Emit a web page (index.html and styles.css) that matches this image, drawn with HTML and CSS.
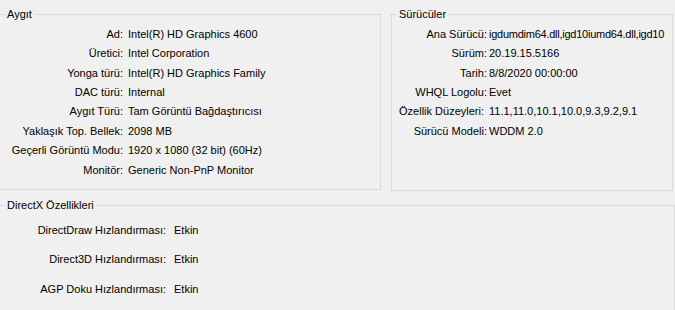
FILE: index.html
```html
<!DOCTYPE html>
<html lang="tr">
<head>
    <meta charset="UTF-8">
    <title>Ekran</title>
    <link rel="stylesheet" href="styles.css">
</head>
<body>

<div class="dx-page">
    <div class="dx-top">
        <fieldset class="dx-group dx-device">
            <legend class="dx-legend">Aygıt</legend>
            <div class="dx-rows">
                <div class="dx-label">Ad:</div><div class="dx-value">Intel(R) HD Graphics 4600</div>
                <div class="dx-label">Üretici:</div><div class="dx-value">Intel Corporation</div>
                <div class="dx-label">Yonga türü:</div><div class="dx-value">Intel(R) HD Graphics Family</div>
                <div class="dx-label">DAC türü:</div><div class="dx-value">Internal</div>
                <div class="dx-label">Aygıt Türü:</div><div class="dx-value">Tam Görüntü Bağdaştırıcısı</div>
                <div class="dx-label">Yaklaşık Top. Bellek:</div><div class="dx-value">2098 MB</div>
                <div class="dx-label">Geçerli Görüntü Modu:</div><div class="dx-value">1920 x 1080 (32 bit) (60Hz)</div>
                <div class="dx-label">Monitör:</div><div class="dx-value">Generic Non-PnP Monitor</div>
            </div>
        </fieldset>
        <fieldset class="dx-group dx-drivers">
            <legend class="dx-legend">Sürücüler</legend>
            <div class="dx-rows">
                <div class="dx-label">Ana Sürücü:</div><div class="dx-value dx-tight">igdumdim64.dll,igd10iumd64.dll,igd10</div>
                <div class="dx-label">Sürüm:</div><div class="dx-value">20.19.15.5166</div>
                <div class="dx-label">Tarih:</div><div class="dx-value">8/8/2020 00:00:00</div>
                <div class="dx-label">WHQL Logolu:</div><div class="dx-value">Evet</div>
                <div class="dx-label dx-wide">Özellik Düzeyleri:</div><div class="dx-value">11.1,11.0,10.1,10.0,9.3,9.2,9.1</div>
                <div class="dx-label">Sürücü Modeli:</div><div class="dx-value">WDDM 2.0</div>
            </div>
        </fieldset>
    </div>

    <fieldset class="dx-group dx-features">
        <legend class="dx-legend">DirectX Özellikleri</legend>
        <div class="dx-rows">
            <div class="dx-label">DirectDraw Hızlandırması:</div><div class="dx-value">Etkin</div>
            <div class="dx-label">Direct3D Hızlandırması:</div><div class="dx-value">Etkin</div>
            <div class="dx-label">AGP Doku Hızlandırması:</div><div class="dx-value">Etkin</div>
        </div>
    </fieldset>
</div>

</body>
</html>
```

FILE: styles.css
```css
body {
    margin: 0;
    padding: 0;
    background-color: #f0f0f0;
    font-family: "Liberation Sans", Arial, sans-serif;
    font-size: 11px;
    color: #000;
    overflow: hidden;
}
.dx-page {
    width: 676px;
    height: 310px;
    margin-left: -1px;
    padding-top: 7px;
    box-sizing: border-box;
    overflow: hidden;
}
.dx-top {
    display: flex;
    gap: 10px;
}
.dx-group {
    margin: 0;
    padding: 0;
    min-width: 0;
    border: 1px solid #dadada;
    box-sizing: border-box;
}
.dx-legend {
    margin-left: 5px;
    padding: 0 2px;
    line-height: 14px;
}
.dx-device {
    width: 382px;
    height: 183px;
}
.dx-drivers {
    width: 282px;
    height: 184px;
}
.dx-features {
    width: 676px;
    height: 116px;
    margin-top: 7px;
}
.dx-rows {
    display: grid;
    align-items: center;
    white-space: nowrap;
}
.dx-label {
    text-align: right;
}
.dx-value {
    overflow: hidden;
}
.dx-tight {
    letter-spacing: -0.25px;
}
.dx-device .dx-rows {
    grid-template-columns: 123px 1fr;
    grid-auto-rows: 19.45px;
    column-gap: 5px;
    padding-top: 3px;
}
.dx-drivers .dx-rows {
    grid-template-columns: 95px 1fr;
    grid-auto-rows: 19.45px;
    column-gap: 2px;
    padding-top: 3px;
}
.dx-drivers .dx-wide {
    margin-left: -14px;
    padding-right: 3px;
}
.dx-features .dx-rows {
    grid-template-columns: 166px 1fr;
    grid-auto-rows: 29.5px;
    column-gap: 8px;
    padding-top: 3px;
}
```
